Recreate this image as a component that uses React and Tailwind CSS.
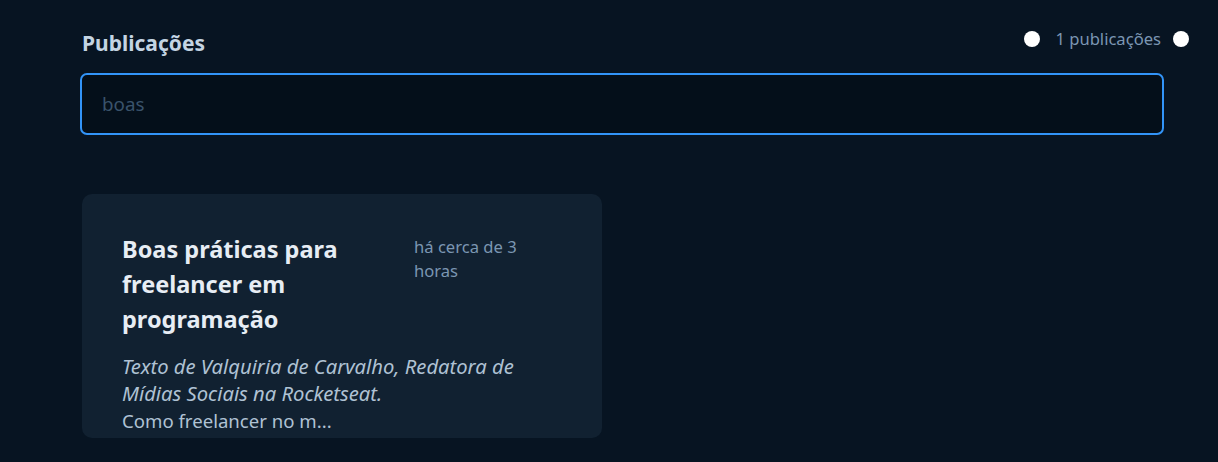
import React from "react";

const PostCard = ({ title, time, intro, body }) => {
  return (
    <div className="ml-[2px] w-[520px] h-[244px] overflow-hidden rounded-[10px] bg-[#112131] px-10 pt-[38px]">
      <div className="flex gap-4">
        <h2 className="w-[276px] text-[23.5px] leading-[35px] font-bold text-[#E7EDF4]">
          {title}
        </h2>
        <span className="w-[130px] pt-[3px] text-[16.6px] leading-[24px] text-[#7B96B2]">
          {time}
        </span>
      </div>
      <p className="mt-[16px] text-[18.6px] leading-[27px] text-[#AFC2D4]">
        <em className="text-[20.2px]">{intro}</em>
        <br />
        {body}
      </p>
    </div>
  );
};

export default function App() {
  return (
    <div
      className="min-h-[462px] w-full bg-[#071422] pl-20 pt-[27px]"
      style={{ fontFamily: '"Noto Sans", "Open Sans", sans-serif' }}
    >
      {/* Header */}
      <div className="ml-[2px] flex w-[1107px] items-start justify-between">
        <h1 className="text-[21px] leading-[32px] font-bold text-[#C4D4E3]">
          Publicações
        </h1>
        <div className="flex items-center pt-[1px] text-[16.6px] leading-[22px] text-[#7B96B2]">
          <span className="h-4 w-4 rounded-full bg-white" />
          <span className="ml-[15px] mr-3">1 publicações</span>
          <span className="h-4 w-4 rounded-full bg-white" />
        </div>
      </div>

      {/* Search */}
      <input
        type="text"
        placeholder="boas"
        className="mt-[14px] h-[62px] w-[1084px] rounded-[7px] border-2 border-[#3294F8] bg-[#040F1A] px-5 text-[18.8px] text-[#AFC2D4] outline-none placeholder:text-[#3A536B]"
      />

      {/* Posts */}
      <div className="mt-[59px]">
        <PostCard
          title="Boas práticas para freelancer em programação"
          time="há cerca de 3 horas"
          intro="Texto de Valquiria de Carvalho, Redatora de Mídias Sociais na Rocketseat."
          body="Como freelancer no m..."
        />
      </div>
    </div>
  );
}
